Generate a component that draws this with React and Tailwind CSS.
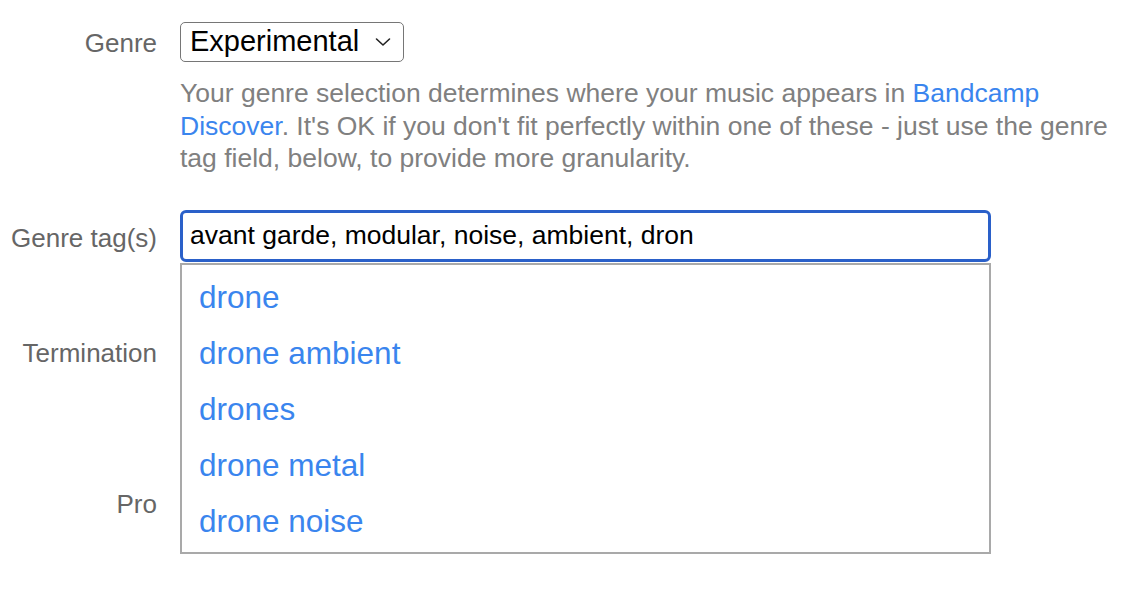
import React, { useState } from 'react';

const suggestions = ['drone', 'drone ambient', 'drones', 'drone metal', 'drone noise'];

const Label = ({ children, className = '' }) => (
  <div className={`w-[157px] shrink-0 text-right text-[26px] leading-[32px] text-[#666666] ${className}`}>
    {children}
  </div>
);

const App = () => {
  const [tags, setTags] = useState('avant garde, modular, noise, ambient, dron');

  return (
    <div className="min-h-[592px] w-[1138px] bg-white pt-[22px] font-['Liberation_Sans',Arial,sans-serif]">
      {/* Genre */}
      <div className="flex gap-[23px]">
        <Label className="mt-[5px]">Genre</Label>
        <div className="flex flex-col">
          <div className="flex h-[40px] w-[224px] items-center justify-between rounded-[5px] border-[1.5px] border-[#767676] pl-[9px] pr-[12px] text-[29px] text-black">
            <span>Experimental</span>
            <svg width="16" height="10" viewBox="0 0 16 10" fill="none">
              <path d="M1.5 2 L8 8 L14.5 2" stroke="#222" strokeWidth="1.6" strokeLinecap="round" strokeLinejoin="round" />
            </svg>
          </div>
          <p className="mt-[15px] w-[945px] text-[26.5px] leading-[32.5px] text-[#808080]">
            Your genre selection determines where your music appears in{' '}
            <a className="text-[#3a85ee]">Bandcamp Discover</a>. It's OK if you don't fit perfectly within one of
            these - just use the genre tag field, below, to provide more granularity.
          </p>
        </div>
      </div>

      {/* Genre tags */}
      <div className="mt-[35px] flex gap-[23px]">
        <Label className="mt-[12px]">Genre tag(s)</Label>
        <div className="relative">
          <input
            value={tags}
            onChange={(e) => setTags(e.target.value)}
            className="h-[52px] w-[811px] rounded-[6px] border-[3px] border-[#2a60c9] px-[7px] text-[26.5px] text-black outline-none"
          />
          <ul className="absolute left-0 top-[53px] z-10 w-[811px] border-2 border-[#a9a9a9] bg-white pb-[3px] pt-[4px]">
            {suggestions.map((s) => (
              <li key={s} className="h-[56px] pl-[17px] text-[31.5px] leading-[56px] text-[#3a85ee]">
                {s}
              </li>
            ))}
          </ul>
        </div>
      </div>

      {/* Termination */}
      <div className="mt-[75px] flex gap-[23px]">
        <Label>Termination</Label>
      </div>

      {/* Pro */}
      <div className="mt-[119px] flex gap-[23px]">
        <Label>Pro</Label>
      </div>
    </div>
  );
};

export default App;
